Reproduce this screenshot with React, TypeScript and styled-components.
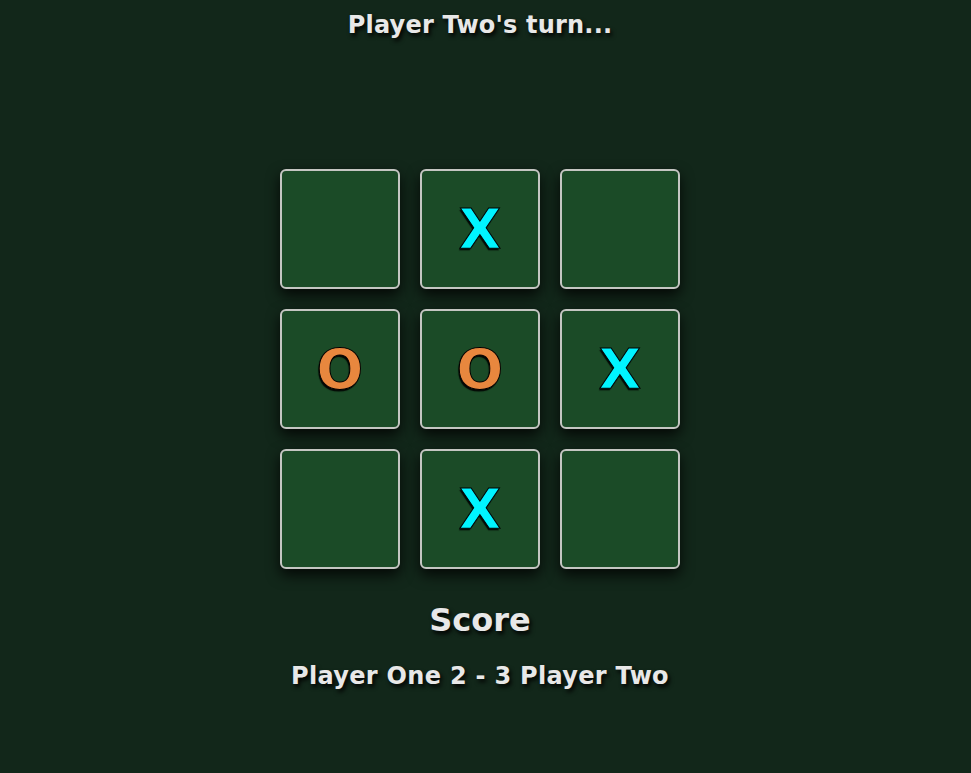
import React from 'react'
import styled, { createGlobalStyle } from 'styled-components'

const GlobalStyle = createGlobalStyle`
  html, body {
    margin: 0;
    padding: 0;
    background: #12271a;
  }
  body {
    font-family: "DejaVu Sans", Verdana, sans-serif;
    color: #e8e8e8;
  }
`

const Wrapper = styled.main`
  width: 960px;
  height: 773px;
  display: flex;
  flex-direction: column;
  align-items: center;
  text-shadow: 2px 3px 4px rgba(0, 0, 0, 0.95);
`

const Status = styled.h2`
  margin: 11px 0 0;
  font-size: 24px;
  letter-spacing: 0.2px;
  font-weight: bold;
  line-height: 28px;
`

const Board = styled.div`
  margin-top: 130px;
  display: grid;
  grid-template-columns: repeat(3, 120px);
  grid-auto-rows: 120px;
  gap: 20px;
`

const Cell = styled.div<{ $mark: string }>`
  box-sizing: border-box;
  border: 2px solid #c4c6c2;
  border-radius: 6px;
  background: #1b4b27;
  box-shadow: 0 6px 14px rgba(0, 0, 0, 0.8);
  display: flex;
  align-items: center;
  justify-content: center;
  font-size: 55px;
  font-weight: bold;
  color: ${(p) => (p.$mark === 'X' ? '#00f4ff' : '#e8873e')};
  -webkit-text-stroke: 1px #000;
  text-shadow: -1px 2px 1px rgba(0, 0, 0, 0.9);
`

const ScoreTitle = styled.h1`
  margin: 32px 0 0;
  font-size: 32px;
  line-height: 38px;
  font-weight: bold;
`

const ScoreLine = styled.p`
  margin: 23px 0 0;
  font-size: 24px;
  letter-spacing: 0.3px;
  line-height: 28px;
  font-weight: bold;
`

const board: string[] = ['', 'X', '', 'O', 'O', 'X', '', 'X', '']

const App = () => {
  return (
    <Wrapper>
      <GlobalStyle />
      <Status>Player Two's turn...</Status>
      <Board>
        {board.map((m, i) => (
          <Cell key={i} $mark={m}>
            {m}
          </Cell>
        ))}
      </Board>
      <ScoreTitle>Score</ScoreTitle>
      <ScoreLine>Player One 2 - 3 Player Two</ScoreLine>
    </Wrapper>
  )
}

export default App
